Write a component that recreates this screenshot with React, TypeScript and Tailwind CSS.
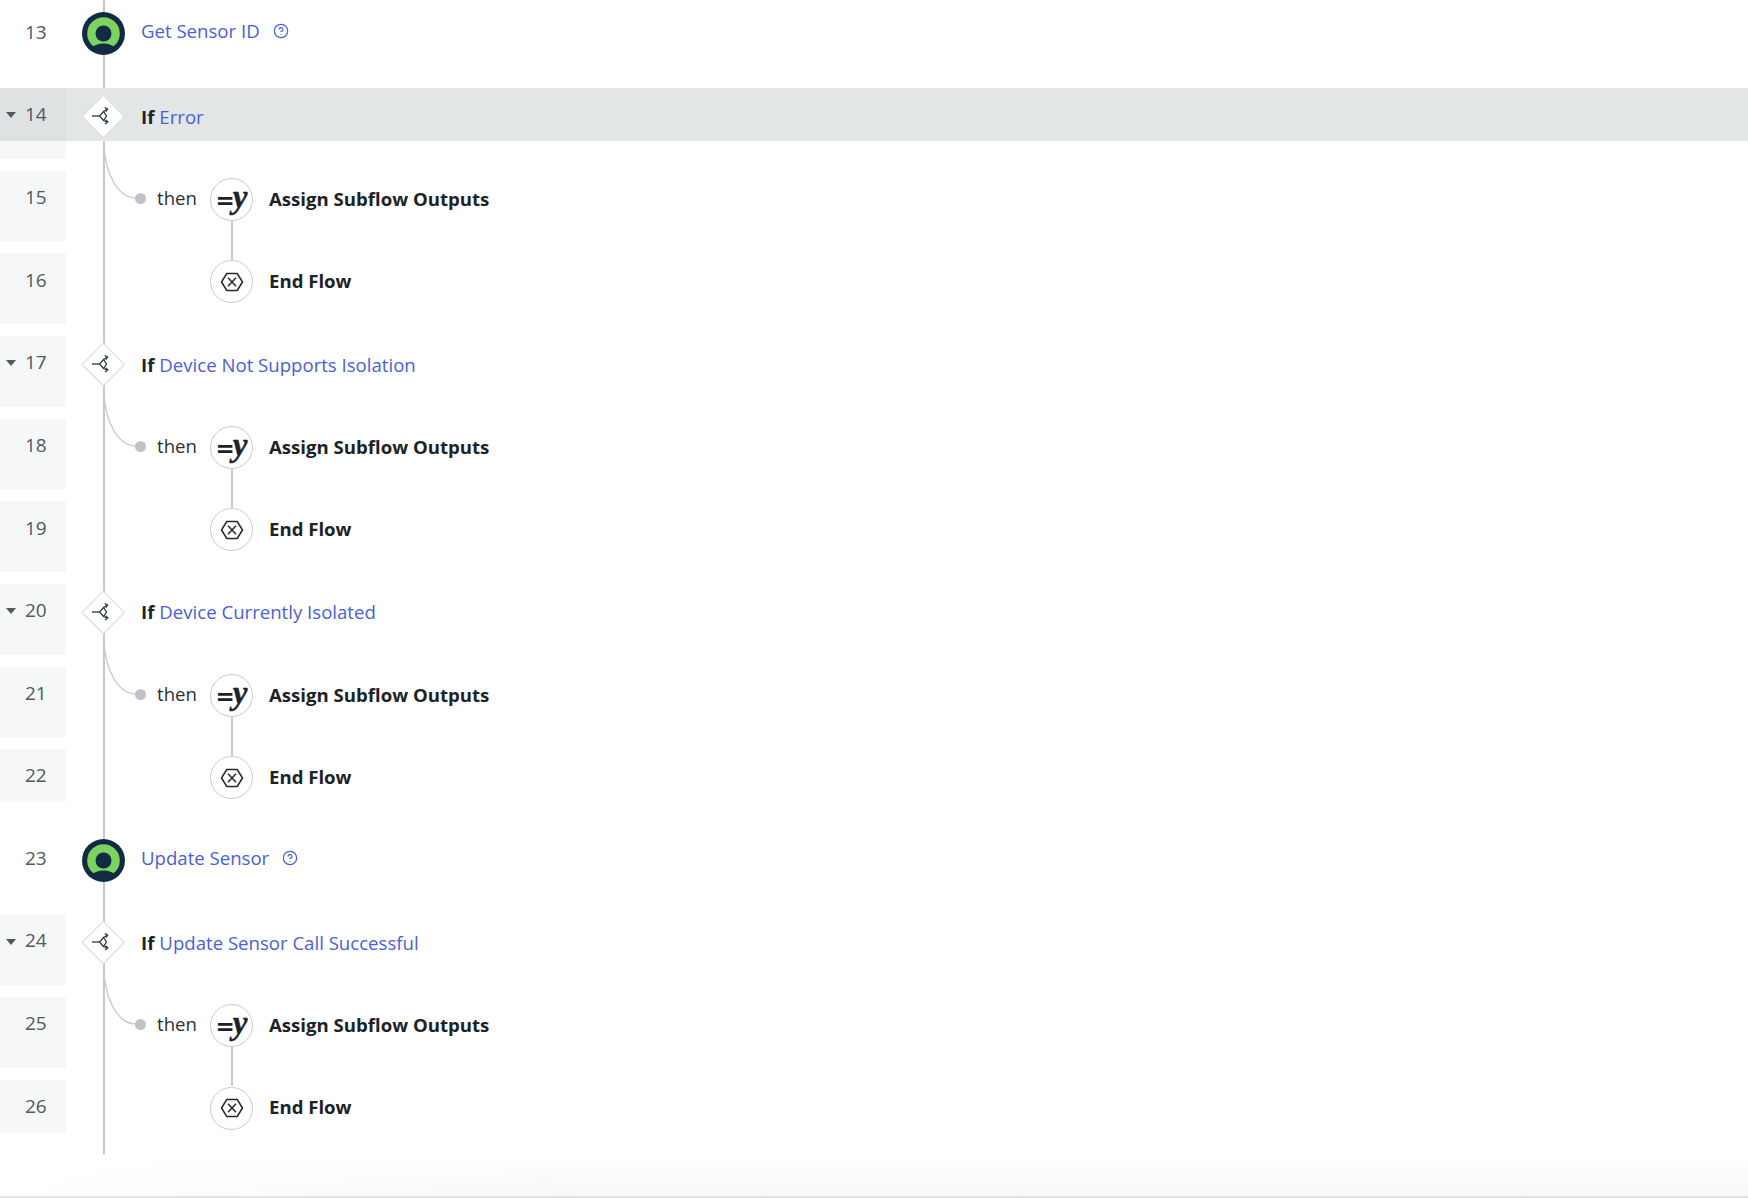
import { CircleHelp } from 'lucide-react';

type Step = {
  n: number;
  kind: 'action' | 'if' | 'assign' | 'end';
  title?: string;
  then?: boolean;
  row?: string;
  selected?: boolean;
};

const steps: Step[] = [
  { n: 13, kind: 'action', title: 'Get Sensor ID' },
  { n: 14, kind: 'if', title: 'Error', selected: true },
  { n: 15, kind: 'assign', then: true },
  { n: 16, kind: 'end' },
  { n: 17, kind: 'if', title: 'Device Not Supports Isolation' },
  { n: 18, kind: 'assign', then: true },
  { n: 19, kind: 'end' },
  { n: 20, kind: 'if', title: 'Device Currently Isolated' },
  { n: 21, kind: 'assign', then: true },
  { n: 22, kind: 'end', row: 'h-[53px] mb-0' },
  { n: 23, kind: 'action', title: 'Update Sensor', row: 'h-[70px] mt-[30px] mb-3' },
  { n: 24, kind: 'if', title: 'Update Sensor Call Successful' },
  { n: 25, kind: 'assign', then: true },
  { n: 26, kind: 'end', row: 'h-[53.67px] mb-0' },
];

function SensorLogo() {
  return (
    <svg width="43" height="43" viewBox="0 0 43 43" className="relative z-[1]">
      <circle cx="21.5" cy="21.5" r="21.5" fill="#122b43" />
      <circle cx="21.5" cy="21.5" r="16.3" fill="#7dd35f" />
      <circle cx="21.5" cy="21.5" r="8" fill="#122b43" />
      <path d="M9 36 Q14 31.5 21.5 31.5 Q29 31.5 34 36 L30 39 L13 39 Z" fill="#122b43" />
    </svg>
  );
}

function BranchNode() {
  return (
    <div className="relative z-[1] flex h-[43px] w-[43px] items-center justify-center">
      <div className="h-[30.5px] w-[30.5px] rotate-45 border border-[#d6d8da] bg-white" />
      <svg width="20" height="18" viewBox="0 0 20 18" fill="none" stroke="#2f3a3d" strokeWidth="1.3" className="absolute left-[9px] top-[12px]">
        <path d="M1 9 H8.5" />
        <path d="M8.5 9 L12.5 4.5 L15.5 9 L12.5 13.5 Z" />
        <path d="M12.5 4.5 L16 2.5 M12.5 13.5 L16 15" />
        <path d="M13.8 0.6 L16.6 2.3 L14.8 4.6 M14.6 12.8 L16.8 15 L14 16.9" />
      </svg>
    </div>
  );
}

function EndIcon() {
  return (
    <svg width="24" height="20" viewBox="0 0 24 20" fill="none" stroke="#23292c" strokeWidth="1.5">
      <path d="M1.5 10 L6.8 1.5 H17.2 L22.5 10 L17.2 18.5 H6.8 Z" strokeLinejoin="round" />
      <path d="M8 5.8 L16 14.2 M16 5.8 L8 14.2" />
    </svg>
  );
}

function Gutter({ step }: { step: Step }) {
  const blank = step.kind === 'action';
  return (
    <div className={`h-full w-[66px] shrink-0 ${blank ? '' : 'bg-[#f6f8f8]'}`}>
      <div className={`flex h-[53px] items-center pl-[6px] ${step.selected ? 'bg-[#dfe2e3]' : ''}`}>
        <div className="w-[20px] translate-y-px">
          {step.kind === 'if' && (
            <svg width="10" height="6" viewBox="0 0 10 6">
              <path d="M0 0 H10 L5 6 Z" fill="#4e5a5c" />
            </svg>
          )}
        </div>
        <span className="-ml-px text-[19px] text-[#4e5a5c]">{step.n}</span>
      </div>
    </div>
  );
}

function Row({ step }: { step: Step }) {
  const rowClass = step.row ?? 'h-[70.67px] mb-3';
  const isChild = step.kind === 'assign' || step.kind === 'end';

  return (
    <div className={`relative flex ${rowClass} ${step.selected ? 'z-[1]' : ''}`}>
      <Gutter step={step} />

      {!isChild && (
        <div className={`flex h-[53px] flex-1 items-start pl-4 pt-[7px] ${step.selected ? 'bg-[#e3e6e7]' : ''}`}>
          {step.kind === 'action' ? <SensorLogo /> : <BranchNode />}
          <div className={`ml-4 flex h-[43px] items-center text-[18.6px] ${step.kind === 'action' ? '-translate-y-[3px]' : '-translate-y-[0.5px]'}`}>
            {step.kind === 'if' && <span className="mr-[5px] font-bold text-[#1c2326]">If</span>}
            <span className="text-[#4a5ee0]">{step.title}</span>
            {step.kind === 'action' && <CircleHelp size={16} strokeWidth={1.8} className="ml-[13px] text-[#4a5ee0]" />}
          </div>
        </div>
      )}

      {isChild && (
        <div className="flex h-[53px] flex-1 items-start pt-[7px]">
          <div className="flex h-[43px] w-[144px] items-center pl-[69px]">
            {step.then && (
              <>
                <svg width="34" height="60" viewBox="0 0 34 60" fill="none" className="absolute left-[103px] top-[-30px]">
                  <path d="M0.5 0 C2 32 14 57 33 57" stroke="#c9cace" strokeWidth="1.4" />
                </svg>
                <span className="relative z-[1] h-[11px] w-[11px] shrink-0 -translate-y-px rounded-full bg-[#c1c2c7]" />
                <span className="ml-[11px] -translate-y-px text-[18.6px] text-[#2a3134]">then</span>
              </>
            )}
          </div>
          <div className="relative flex h-[43px] w-[43px] items-center justify-center rounded-full border border-[#c9cbcd] bg-white">
            {step.kind === 'assign' ? (
              <span className="flex -translate-y-[2px] items-baseline text-[#1c2326]">
                <span className="font-['DejaVu_Sans',sans-serif] text-[23px] font-bold italic leading-none">=</span>
                <span className="-ml-[2px] font-['Liberation_Serif',serif] text-[33px] font-bold italic leading-none [-webkit-text-stroke:0.4px_#1c2326]">y</span>
              </span>
            ) : (
              <EndIcon />
            )}
            {step.kind === 'assign' && <div className="absolute left-[20px] top-full h-[40px] w-[2px] bg-[#c9cbcd]" />}
          </div>
          <div className={`ml-4 flex h-[43px] items-center text-[18.6px] font-bold text-[#1c2326] ${step.kind === 'end' ? '-translate-y-px' : ''}`}>
            {step.kind === 'assign' ? 'Assign Subflow Outputs' : 'End Flow'}
          </div>
        </div>
      )}
    </div>
  );
}

export default function App() {
  return (
    <div className="relative h-[1198px] w-full overflow-hidden bg-white pt-[5.33px] font-['Open_Sans',sans-serif]">
      <div className="absolute left-[102.5px] top-0 h-[1154px] w-[2px] bg-[#c7c8cb]" />

      {steps.map((step) => (
        <Row key={step.n} step={step} />
      ))}

      <div className="mt-[21px] h-[43.67px] border-b-2 border-[#e0e2e4] bg-linear-to-b from-white to-[#f7f7f7]">
        <div className="h-full bg-linear-to-r from-white to-transparent to-[35%]" />
      </div>
    </div>
  );
}
